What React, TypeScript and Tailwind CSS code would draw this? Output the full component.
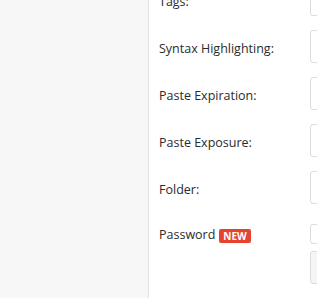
export default function App() {
  const rows = ["Tags:", "Syntax Highlighting:", "Paste Expiration:", "Paste Exposure:", "Folder:"];

  return (
    <div className="flex h-[298px] w-[317px] overflow-hidden bg-white font-['Open_Sans',sans-serif] text-[12.5px] text-[#2b2b2b]">
      {/* left sidebar */}
      <div className="w-[149px] shrink-0 border-r border-[#e2e2e2] bg-[#f7f7f7]" />

      {/* settings form */}
      <div className="flex-1 pl-[10px]">
        <div className="-mt-[17px] flex flex-col">
          {rows.map((label) => (
            <div key={label} className="mb-[14px] flex h-[33px] items-center">
              <div className="w-[151px] shrink-0 pt-[5px]">{label}</div>
              <div className="h-[33px] w-[100px] shrink-0 rounded-[3px] border border-[#dcdcdc] bg-white" />
            </div>
          ))}

          {/* Password */}
          <div className="flex pt-[6px]">
            <div className="flex h-[20px] w-[151px] shrink-0 items-center gap-[4px] pt-[3px]">
              <span>Password</span>
              <span className="rounded-[2px] bg-[#e5432f] px-[4px] text-[10px] font-bold leading-[14px] text-white">NEW</span>
            </div>
            <div className="flex flex-col">
              <div className="h-[20px] w-[20px] rounded-[3px] border border-[#dcdcdc] bg-white" />
              <div className="mt-[7px] h-[33px] w-[100px] rounded-[3px] border border-[#dcdcdc] bg-[#f5f5f5]" />
            </div>
          </div>
        </div>
      </div>
    </div>
  );
}
